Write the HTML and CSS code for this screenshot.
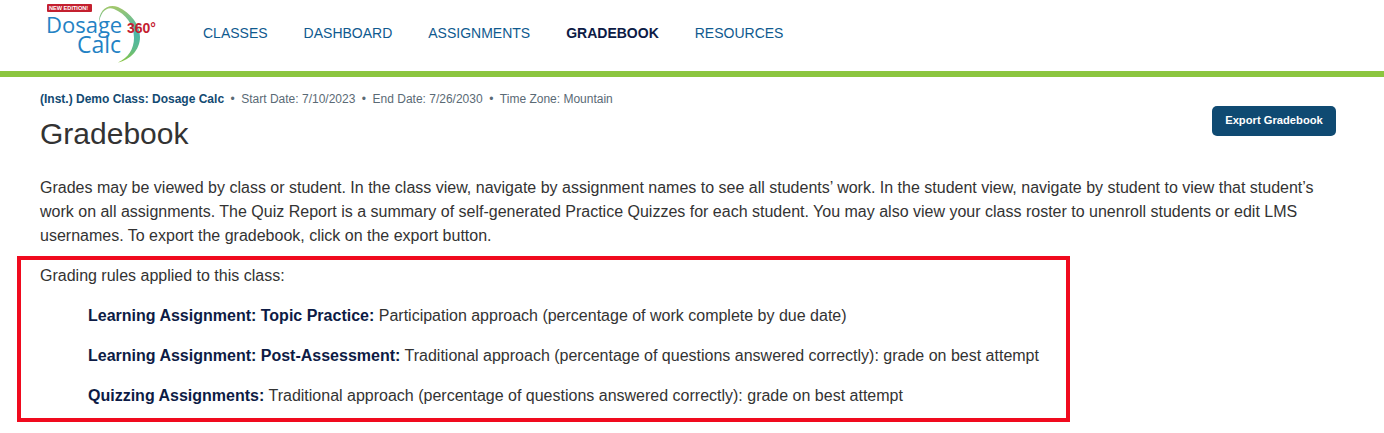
FILE: index.html
```
<!DOCTYPE html>
<html lang="en">
<head>
<meta charset="utf-8">
<title>Gradebook</title>
<link rel="stylesheet" href="styles.css">
</head>
<body>
<header class="topbar">
  <a class="logo" href="#">
    <svg width="130" height="68" viewBox="0 0 130 68">
      <defs>
        <linearGradient id="arc" x1="0" y1="0" x2="0" y2="1">
          <stop offset="0" stop-color="#a5c86a"/>
          <stop offset="0.45" stop-color="#49b6ac"/>
          <stop offset="0.75" stop-color="#5dbb8c"/>
          <stop offset="1" stop-color="#8cc63f"/>
        </linearGradient>
      </defs>
      <path d="M69 24C68 10 78 3 88 7C101 13 110 25 110 37C110 50 100 60 88 62.5C98 58 104 49 104 38C104 25 96 14 84 9C76 6 70 13 69 24Z" fill="url(#arc)"/>
      <rect x="17" y="4" width="45" height="8" rx="1" fill="#c4202f"/>
      <text x="19" y="10.2" class="logo-badge">NEW EDITION!</text>
      <text x="16" y="33" class="logo-word">Dosage</text>
      <text x="47" y="53" class="logo-word logo-calc">Calc</text>
      <text x="97" y="33" class="logo-360">360°</text>
    </svg>
  </a>
  <nav class="mainnav">
    <a href="#">CLASSES</a>
    <a href="#">DASHBOARD</a>
    <a href="#">ASSIGNMENTS</a>
    <a href="#" class="active">GRADEBOOK</a>
    <a href="#">RESOURCES</a>
  </nav>
</header>
<main class="content">
  <div class="headrow">
    <div>
      <p class="meta"><a href="#">(Inst.) Demo Class: Dosage Calc</a><span class="dot">•</span>Start Date: 7/10/2023<span class="dot">•</span>End Date: 7/26/2030<span class="dot">•</span>Time Zone: Mountain</p>
      <h1>Gradebook</h1>
    </div>
    <button class="export">Export Gradebook</button>
  </div>
  <p class="intro">Grades may be viewed by class or student. In the class view, navigate by assignment names to see all students’ work. In the student view, navigate by student to view that student’s work on all assignments. The Quiz Report is a summary of self-generated Practice Quizzes for each student. You may also view your class roster to unenroll students or edit LMS usernames. To export the gradebook, click on the export button.</p>
  <section class="rules">
    <p>Grading rules applied to this class:</p>
    <ul>
      <li><b>Learning Assignment: Topic Practice:</b> Participation approach (percentage of work complete by due date)</li>
      <li><b>Learning Assignment: Post-Assessment:</b> Traditional approach (percentage of questions answered correctly): grade on best attempt</li>
      <li><b>Quizzing Assignments:</b> Traditional approach (percentage of questions answered correctly): grade on best attempt</li>
    </ul>
  </section>
</main>
</body>
</html>
```
FILE: styles.css
```
* { box-sizing: border-box; }
html, body { margin: 0; padding: 0; }
body { font-family: "Liberation Sans", Arial, sans-serif; color: #333; background: #fff; overflow: hidden; }
a { text-decoration: none; }
.topbar { height: 77px; border-bottom: 6px solid #8cc63f; display: flex; align-items: flex-start; padding-left: 30px; }
.logo { display: block; width: 173px; height: 68px; }
.logo svg { display: block; }
.logo-badge { font: bold 5.6px "Liberation Sans", sans-serif; fill: #fff; }
.logo-word { font: 22px "Open Sans", sans-serif; fill: #2382c4; }
.logo-calc { font-size: 23px; }
.logo-360 { font: bold 14px "Liberation Sans", sans-serif; fill: #c4202f; }
.mainnav { display: flex; gap: 36px; padding-top: 25px; font-size: 14px; line-height: 16px; }
.mainnav a { color: #0f5a8f; }
.mainnav a.active { color: #0d1b45; font-weight: bold; }
.content { padding: 14px 48px 0 40px; }
.headrow { display: flex; justify-content: space-between; align-items: flex-start; }
.meta { margin: 0; font-size: 12px; line-height: 16px; color: #5a6a75; }
.meta a { color: #124a72; font-weight: bold; }
.dot { margin: 0 6.5px; }
h1 { margin: 9px 0 0; font-size: 30px; font-weight: 400; line-height: 36px; color: #333; }
.export { margin-top: 15px; width: 124px; height: 30px; padding: 0 0 2px; border: 0; border-radius: 5px; background: #0f4a72; color: #fff; font: bold 11.2px "Liberation Sans", sans-serif; }
.intro { margin: 24px 0 0; font-size: 16px; line-height: 24px; color: #333; }
.rules { margin: 8px 0 0 -23px; width: 1053px; height: 166px; border: 4px solid #f00a1e; padding: 4px 0 0 19px; font-size: 16px; line-height: 24px; }
.rules p { margin: 0; }
.rules ul { list-style: none; margin: 16px 0 0; padding: 0 0 0 48px; display: flex; flex-direction: column; gap: 16px; }
.rules b { color: #0d1b45; }
```
